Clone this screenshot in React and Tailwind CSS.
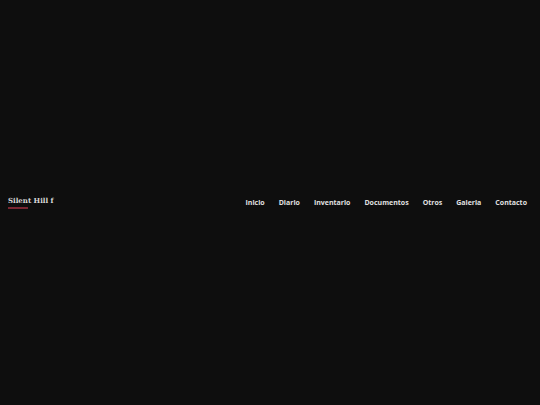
import React from 'react'

const links = ['Inicio', 'Diario', 'Inventario', 'Documentos', 'Otros', 'Galeria', 'Contacto']

export default function App() {
  return (
    <div className="h-[405px] w-full bg-[#0e0e0e] flex items-center">
      <header className="w-full flex items-center justify-between pl-[8px] pr-[13px] pt-[2px]">
        <div className="flex flex-col -mt-[3px]">
          <span className="text-[7px] leading-[9px] font-bold text-[#d8d8d8]" style={{ fontFamily: '"DejaVu Serif", serif' }}>
            Silent Hill f
          </span>
          <span className="mt-[2px] h-[2px] w-[20px] bg-[#7a2632]" />
        </div>
        <nav className="flex items-center gap-[14px]" style={{ fontFamily: '"Open Sans", sans-serif' }}>
          {links.map((l) => (
            <a key={l} href="#" className="text-[7px] font-bold text-[#e0e0e0]">
              {l}
            </a>
          ))}
        </nav>
      </header>
    </div>
  )
}
